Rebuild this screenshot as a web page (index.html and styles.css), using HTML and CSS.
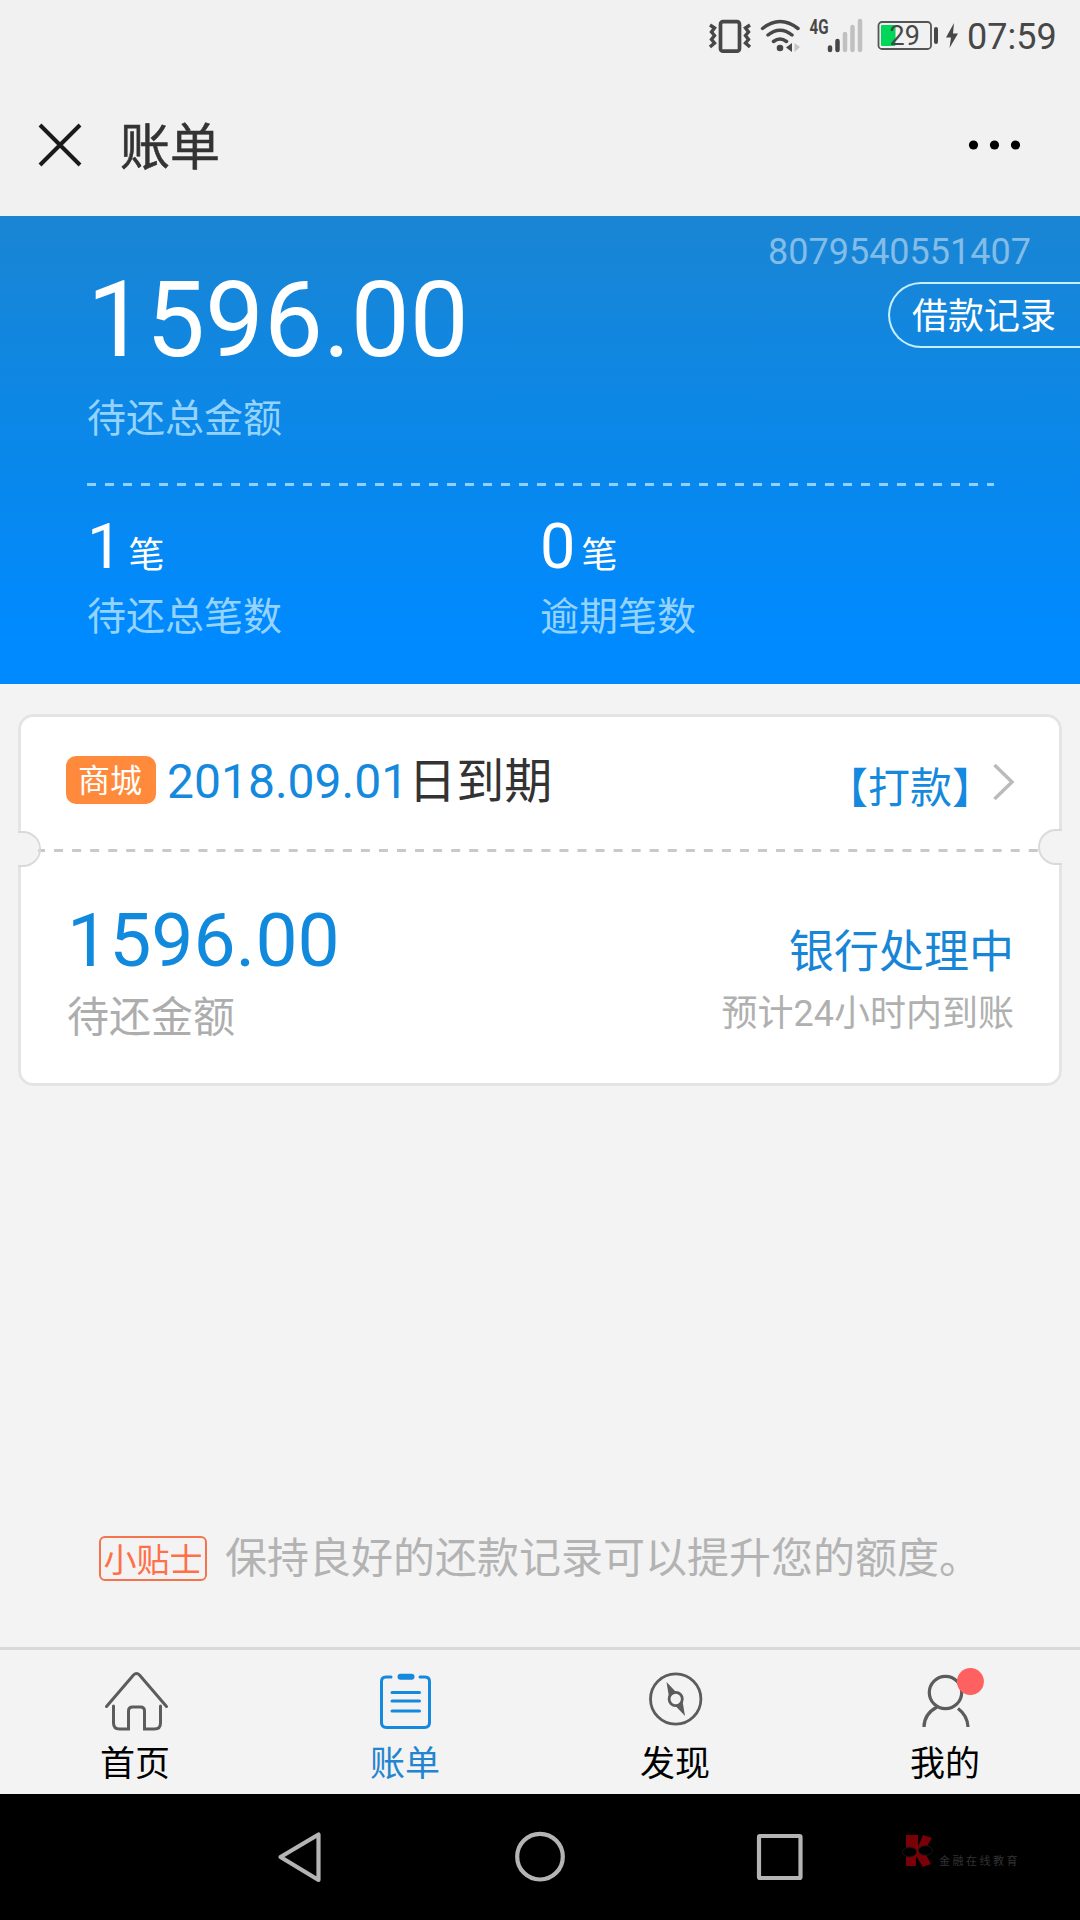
FILE: index.html
```html
<!DOCTYPE html>
<html lang="zh-CN">
<head>
<meta charset="utf-8">
<title>账单</title>
<link rel="stylesheet" href="styles.css">
</head>
<body>
<div class="phone">
  <div class="status">
    <svg class="status-icons" width="260" height="60" viewBox="700 0 260 60" fill="none">
      <rect x="720.500" y="21.700" width="19" height="29.500" rx="2.500" stroke="#474747" stroke-width="3.700"/>
      <path d="M710 25l4.500 3-3 4 3 3.500-3 4 3 3.500-4.500 4M750 25l-4.500 3 3 4-3 3.500 3 4-3 3.500 4.500 4" stroke="#474747" stroke-width="3.400"/>
      <path d="M762.500 28.500q17.500-14 35.500 0M768 35q12-9.500 24 0M773.500 41.500q6.500-5 13 0" stroke="#474747" stroke-width="3.500" stroke-linecap="round"/>
      <circle cx="780" cy="48" r="3.300" fill="#474747"/>
      <path d="M792 43v9l-6-4.500z" fill="#474747"/><path d="M794.500 43v9l5.500-5z" fill="#c4c4c4"/>
      <path d="M830 47.500v2.500M837.500 41v9" stroke="#474747" stroke-width="4.500" stroke-linecap="round"/>
      <path d="M845 34v16M852.500 27v23M860 21v29" stroke="#c0c0c0" stroke-width="4.500" stroke-linecap="round"/>
      <rect x="878.500" y="22" width="52.500" height="27" rx="3.500" stroke="#555" stroke-width="1.800"/>
      <rect x="881" y="25" width="14.500" height="21" rx="1" fill="#00d659"/>
      <path d="M936 29v13" stroke="#474747" stroke-width="4" stroke-linecap="round"/>
      <path d="M954 23l-8 14.500h5l-1.500 10.500 8.500-14.500h-5z" fill="#474747"/>
      <text class="net" x="809.500" y="34" textLength="19" lengthAdjust="spacingAndGlyphs">4G</text>
      <text class="charge" x="889.500" y="45">29</text>
    </svg>
    <span class="clock">07:59</span>
  </div>
  <div class="titlebar">
    <svg width="44" height="44" viewBox="0 0 44 44"><path d="M2 2l40 40M42 2L2 42" stroke="#1a1a1a" stroke-width="4"/></svg>
    <h1 class="title">账单</h1>
    <svg class="more" width="54" height="10" viewBox="0 0 54 10"><circle cx="5.500" cy="5" r="4.600"/><circle cx="26.500" cy="5" r="4.600"/><circle cx="47.500" cy="5" r="4.600"/></svg>
  </div>
  <section class="summary">
    <div class="account">8079540551407</div>
    <div class="total-row">
      <div class="total">1596.00</div>
      <a class="records">借款记录</a>
    </div>
    <div class="label">待还总金额</div>
    <svg class="rule" width="907" height="3"><path d="M0 1.500h907" stroke="#8fd2ff" stroke-width="3" stroke-dasharray="9 9"/></svg>
    <div class="counts">
      <div class="count"><div class="num">1<span class="unit">笔</span></div><div class="label">待还总笔数</div></div>
      <div class="count"><div class="num">0<span class="unit">笔</span></div><div class="label">逾期笔数</div></div>
    </div>
  </section>
  <section class="card">
    <div class="due">
      <span class="tag">商城</span>
      <span class="date">2018.09.01</span><span class="expire">日到期</span>
      <span class="pay">【打款】</span>
      <svg class="arrow" width="22" height="38" viewBox="0 0 22 38" fill="none"><path d="M1.500 2l17.500 17-17.500 17" stroke="#bbb" stroke-width="3.500"/></svg>
    </div>
    <svg class="perforation" width="1044" height="40" viewBox="18 829 1044 40" fill="none">
      <path d="M36 850.500H1042" stroke="#c9c9c9" stroke-width="3" stroke-dasharray="9 9.050"/>
      <path d="M17 832h8a17.500 17.500 0 0 1 0 34h-8z" fill="#f3f3f3"/>
      <path d="M18 832h5a17 17 0 0 1 0 34h-5" stroke="#dadada" stroke-width="2"/>
      <path d="M1063 830h-7a17 17 0 0 0 0 34h7z" fill="#f3f3f3"/>
      <path d="M1062 830h-6a17 17 0 0 0 0 34h6" stroke="#dadada" stroke-width="2"/>
    </svg>
    <div class="detail">
      <div class="owed"><div class="amount">1596.00</div><div class="owed-label">待还金额</div></div>
      <div class="state"><div class="state-name">银行处理中</div><div class="eta">预计24小时内到账</div></div>
    </div>
  </section>
  <div class="tip"><span class="tip-tag">小贴士</span><span class="tip-text">保持良好的还款记录可以提升您的额度。</span></div>
  <nav class="tabs">
    <a class="tab">
      <svg width="90" height="70" viewBox="90 1665 90 70" fill="none" stroke="#5c5c5c" stroke-width="3" stroke-linecap="round"><path d="M106.500 1706.500L133.500 1675q3-3 6 0L166.500 1706.500M113.500 1706v17q0 6 6 6h9v-18q0-4 4-4h8q4 0 4 4v18h10q6 0 6-6v-17"/></svg>
      <span>首页</span></a>
    <a class="tab active">
      <svg width="90" height="70" viewBox="360 1665 90 70" fill="none" stroke="#1489dd" stroke-width="3" stroke-linecap="round"><path d="M391 1677h-5q-4.500 0-4.500 4.500v41q0 5 5 5h38q5 0 5-5v-41q0-4.500-4.500-4.500h-5M392 1692.500h27.500M392 1701h27.500M392 1711h27.500"/><path d="M400.500 1676.700h11" stroke-width="6"/></svg>
      <span>账单</span></a>
    <a class="tab">
      <svg width="90" height="70" viewBox="630 1665 90 70" fill="none" stroke="#5c5c5c" stroke-width="2.800"><circle cx="675.700" cy="1699" r="25.200"/><circle cx="675.700" cy="1699" r="6.600"/><path d="M666.500 1682l9 9.500-6.500 5.500zM685 1716l-9-9.500 6.500-5.500z" fill="#5c5c5c" stroke="none"/></svg>
      <span>发现</span></a>
    <a class="tab">
      <svg width="90" height="70" viewBox="900 1665 90 70" fill="none" stroke="#5c5c5c" stroke-width="3.200"><circle cx="945.500" cy="1692.500" r="16.200"/><path d="M924 1727q0-13 13-20M958 1708.500q9.500 7 10 18.500"/><circle cx="970.400" cy="1681.500" r="13.500" fill="#ff6161" stroke="none"/></svg>
      <span>我的</span></a>
  </nav>
  <div class="sysnav">
    <svg class="keys" width="540" height="126" viewBox="270 1794 540 126" fill="none" stroke="#b4b4b4" stroke-width="4.200" stroke-linejoin="round"><path d="M318.500 1834.500v45.500L280.500 1857z"/><circle cx="540" cy="1856.700" r="22.800"/><rect x="759" y="1836" width="41.500" height="42" rx="1"/></svg>
    <svg class="logo" width="32" height="36" viewBox="902 1832 32 36"><path d="M906 1835h12v12l5-12 9 3-8 13 7 13-8 3-7-11v10h-10v-9h6v-9h-6z" fill="#7a0008"/><g stroke="#221a1a" stroke-width=".8"><ellipse cx="909.500" cy="1852" rx="7" ry="4.800"/><ellipse cx="925.500" cy="1850.500" rx="7" ry="4.800"/></g></svg>
    <span class="brand">金融在线教育</span>
  </div>
</div>
</body>
</html>
```
FILE: styles.css
```css
* { box-sizing: border-box; }
body { margin: 0; background: #f3f3f3; font-family: Roboto, "Noto Sans CJK SC", sans-serif; }
svg { display: block; flex: none; }
.phone { width: 1080px; height: 1920px; display: flex; flex-direction: column; overflow: hidden; }
.status { height: 72px; padding-left: 700px; display: flex; background: #f1f1f1; color: #474747; }
.status-icons { margin-right: 7px; }
.net { font: 700 21px Roboto, sans-serif; fill: #474747; }
.charge { font: 27px Roboto, sans-serif; fill: #474747; }
.clock { font-size: 36px; line-height: 75px; }
.titlebar { height: 144px; padding: 2px 38px 0; display: flex; align-items: center; background: #f1f1f1; }
.title { margin: 0 0 0 38px; padding-top: 6px; font-size: 50px; line-height: 72px; font-weight: 400; color: #333; -webkit-text-stroke: .6px #333; }
.more { margin-left: auto; margin-right: 20px; }
.summary { height: 468px; padding: 14px 0 0 87px; color: #fff; background: linear-gradient(#1a85d3, #0a88ea 50%, #008aff 90%); }
.account { height: 42px; padding-right: 49px; text-align: right; font-size: 36px; line-height: 44px; color: #83bce7; }
.total-row { height: 118px; display: flex; justify-content: space-between; }
.total { font-size: 105px; line-height: 98px; }
.records { width: 192px; height: 66px; margin-top: 10px; padding-left: 22px; border: 2px solid #c8efff; border-right: 0; border-radius: 33px 0 0 33px; font-size: 36px; line-height: 67px; }
.label { font-size: 39px; line-height: 58px; color: #95d3ff; }
.rule { margin-top: 35px; }
.counts { display: flex; padding-top: 20px; }
.count { width: 453px; }
.num { height: 82px; font-size: 63px; line-height: 81px; }
.unit { font-size: 36px; margin-left: 6px; }
.card { width: 1044px; height: 372px; margin: 30px 18px 0; background: #fff; border-radius: 15px; box-shadow: inset 0 0 0 3px #e4e4e4; }
.due { height: 115px; padding: 16px 47px 0 48px; display: flex; align-items: center; color: #1489dd; }
.tag { width: 90px; height: 48px; padding-right: 2px; border-radius: 10px; background: #ff8a3c; color: #fff; font-size: 32px; line-height: 50px; text-align: center; }
.date { margin-left: 11px; padding-top: 4px; font-size: 48px; }
.expire { padding-top: 4px; font-size: 48px; line-height: 60px; color: #333; }
.pay { margin: 19px 0 0 auto; font-size: 42px; line-height: 60px; }
.arrow { margin: 5px 0 0 -1px; }
.detail { display: flex; justify-content: space-between; padding: 26px 48px 0 49px; }
.amount { font-size: 75px; line-height: 90px; color: #1189dd; }
.owed-label { font-size: 42px; line-height: 66px; color: #adadad; }
.state { text-align: right; padding-top: 27px; }
.state-name { font-size: 45px; line-height: 62px; color: #1786d7; }
.eta { font-size: 36px; line-height: 60px; color: #b0b0b0; }
.tip { margin-top: auto; height: 181px; padding-left: 99px; display: flex; align-items: center; }
.tip-tag { width: 108px; height: 45px; margin-top: 4px; border: 2px solid #f5734d; border-radius: 6px; color: #ff7048; font-size: 33px; line-height: 45px; text-align: center; }
.tip-text { margin: 0 0 4px 18px; font-size: 42px; color: #b3b3b3; }
.tabs { height: 147px; border-top: 3px solid #d9d9d9; display: flex; }
.tab { width: 270px; padding-top: 15px; display: flex; flex-direction: column; align-items: center; font-size: 35px; line-height: 59px; color: #000; }
.active { color: #2385d0; }
.sysnav { height: 126px; padding-left: 270px; background: #000; display: flex; }
.logo { margin: 38px 0 0 92px; }
.brand { margin: 59px 0 0 5px; font-size: 11px; line-height: 18px; letter-spacing: 2.500px; color: #333; }
```
